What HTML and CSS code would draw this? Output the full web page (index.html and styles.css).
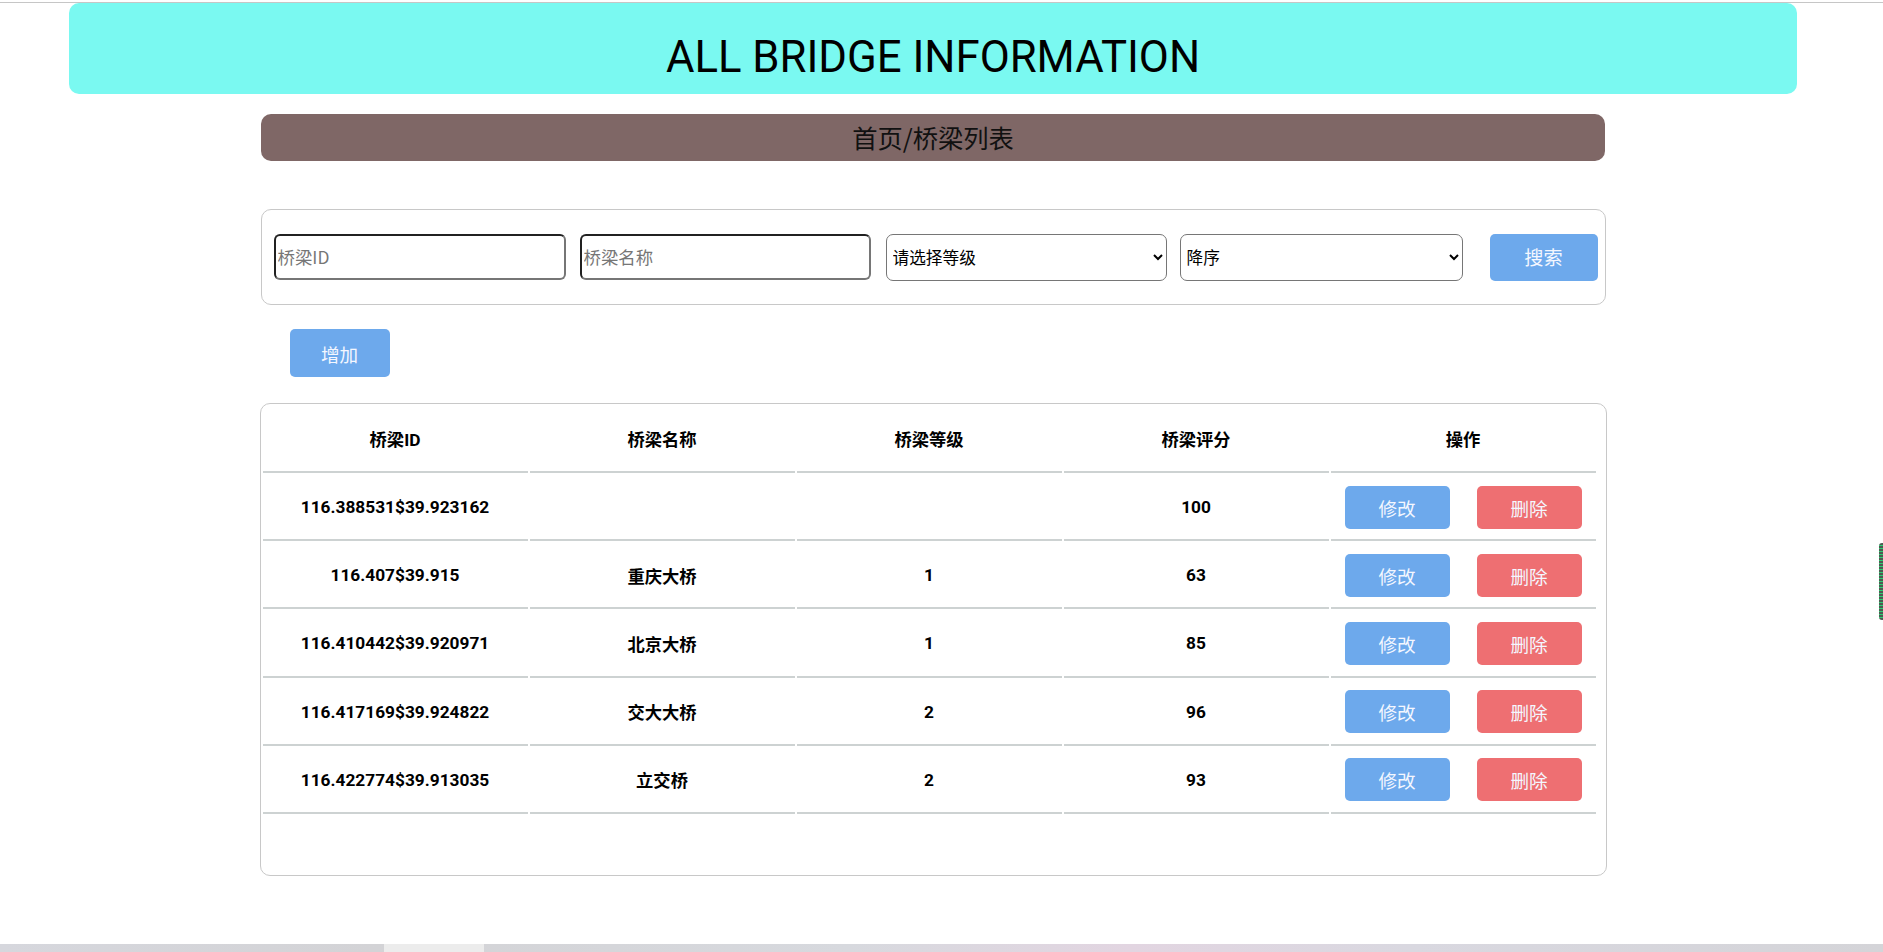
FILE: index.html
```html
<!DOCTYPE html>
<html lang="zh-CN">
<head>
<meta charset="utf-8">
<title>ALL BRIDGE INFORMATION</title>
<link rel="stylesheet" href="styles.css">
</head>
<body>
<div class="screen">
  <div class="topline"></div>
  <div class="page">
    <header class="banner"><h1>ALL BRIDGE INFORMATION</h1></header>
    <nav class="crumb">首页/桥梁列表</nav>
    <form class="search">
      <input class="field field-id" type="text" placeholder="桥梁ID">
      <input class="field field-name" type="text" placeholder="桥梁名称">
      <select class="sel sel-level"><option>请选择等级</option><option>1</option><option>2</option></select>
      <select class="sel sel-order"><option>降序</option><option>升序</option></select>
      <button type="button" class="btn btn-blue btn-search">搜索</button>
    </form>
    <div class="addrow"><button type="button" class="btn btn-blue btn-add">增加</button></div>
    <div class="tablebox">
      <table class="grid">
        <thead>
          <tr><th><div class="c ch">桥梁ID</div></th><th><div class="c ch">桥梁名称</div></th><th><div class="c ch">桥梁等级</div></th><th><div class="c ch">桥梁评分</div></th><th><div class="c ch">操作</div></th></tr>
        </thead>
        <tbody>
          <tr><td><div class="c">116.388531$39.923162</div></td><td><div class="c"></div></td><td><div class="c"></div></td><td><div class="c">100</div></td><td><div class="c ops"><button type="button" class="btn btn-blue btn-op">修改</button><button type="button" class="btn btn-red btn-op">删除</button></div></td></tr>
          <tr><td><div class="c">116.407$39.915</div></td><td><div class="c">重庆大桥</div></td><td><div class="c">1</div></td><td><div class="c">63</div></td><td><div class="c ops"><button type="button" class="btn btn-blue btn-op">修改</button><button type="button" class="btn btn-red btn-op">删除</button></div></td></tr>
          <tr><td><div class="c">116.410442$39.920971</div></td><td><div class="c">北京大桥</div></td><td><div class="c">1</div></td><td><div class="c">85</div></td><td><div class="c ops"><button type="button" class="btn btn-blue btn-op">修改</button><button type="button" class="btn btn-red btn-op">删除</button></div></td></tr>
          <tr><td><div class="c">116.417169$39.924822</div></td><td><div class="c">交大大桥</div></td><td><div class="c">2</div></td><td><div class="c">96</div></td><td><div class="c ops"><button type="button" class="btn btn-blue btn-op">修改</button><button type="button" class="btn btn-red btn-op">删除</button></div></td></tr>
          <tr><td><div class="c">116.422774$39.913035</div></td><td><div class="c">立交桥</div></td><td><div class="c">2</div></td><td><div class="c">93</div></td><td><div class="c ops"><button type="button" class="btn btn-blue btn-op">修改</button><button type="button" class="btn btn-red btn-op">删除</button></div></td></tr>
        </tbody>
      </table>
    </div>
  </div>
  <div class="taskbar"><span class="tb-seg"></span></div>
</div>
<div class="sidewidget"></div>
</body>
</html>
```

FILE: styles.css
```css
html, body {
  margin: 0;
  padding: 0;
  background: #ffffff;
}
body {
  font-family: Roboto, "Noto Sans CJK SC", sans-serif;
  color: #000;
  overflow: hidden;
}
.screen {
  min-height: 952px;
  display: flex;
  flex-direction: column;
}
.topline {
  height: 2px;
  border-bottom: 1px solid #c6c6c6;
}
.page {
  width: 1866px;
  display: flex;
  flex-direction: column;
  align-items: center;
}
.banner {
  width: 1728px;
  box-sizing: border-box;
  height: 91px;
  padding-top: 28px;
  background: #7af9f1;
  border-radius: 10px;
  text-align: center;
}
.banner h1 {
  margin: 0;
  font-family: Roboto, sans-serif;
  font-weight: 400;
  font-size: 43.7px;
  line-height: 52px;
  color: #000;
}
.crumb {
  margin-top: 20px;
  width: 1344px;
  height: 47px;
  background: #7f6766;
  border-radius: 10px;
  text-align: center;
  font-family: "Noto Sans CJK SC", sans-serif;
  font-size: 25.3px;
  line-height: 47px;
  color: #111;
}
.search {
  margin: 48px 0 0;
  width: 1345px;
  height: 96px;
  box-sizing: border-box;
  border: 1px solid #c8c8c8;
  border-radius: 10px;
  display: flex;
  align-items: center;
  padding: 0 7px 0 12px;
}
.field {
  box-sizing: border-box;
  height: 46px;
  border: 2px inset #767676;
  border-radius: 6px;
  padding: 0 2px;
  font-family: "Noto Sans CJK SC", sans-serif;
  font-size: 17.4px;
  background: #fff;
  margin-top: -1px;
}
.field::placeholder { color: #767676; }
.field-id { width: 292px; }
.field-name { width: 291px; margin-left: 14px; }
.sel {
  box-sizing: border-box;
  height: 47px;
  border: 1px solid #767676;
  border-radius: 7px;
  background-color: #fff;
  font-family: "Noto Sans CJK SC", sans-serif;
  font-size: 16.7px;
  color: #000;
  padding: 0 2px;
}
.sel-level { width: 281px; margin-left: 15px; }
.sel-order { width: 283px; margin-left: 13px; }
.btn {
  border: none;
  border-radius: 5px;
  color: #f4f7ff;
  font-family: "Noto Sans CJK SC", sans-serif;
  font-size: 18.6px;
  padding: 0;
  cursor: pointer;
}
.btn-blue { background: #6da9ec; }
.btn-red { background: #ee6f72; }
.btn-search { width: 108px; height: 47px; margin-left: 27px; font-size: 19.2px; }
.addrow {
  width: 1345px;
  margin-top: 24px;
  padding-left: 29px;
  box-sizing: border-box;
}
.btn-add { width: 100px; height: 48px; }
.tablebox {
  margin-top: 26px;
  width: 1347px;
  box-sizing: border-box;
  height: 473px;
  border: 1px solid #c8c8c8;
  border-radius: 10px;
}
.grid {
  width: 1337px;
  table-layout: fixed;
  border-collapse: separate;
  border-spacing: 2px;
}
.grid th, .grid td {
  padding: 0;
  border-bottom: 2px solid #cdd2d2;
  font-size: 17.3px;
  font-weight: 700;
}
.c {
  height: 64.2px;
  display: flex;
  align-items: center;
  justify-content: center;
  text-align: center;
}
.ch { height: 65px; }
.ops { gap: 27px; }
.btn-op { width: 105px; height: 43px; }
.taskbar {
  margin-top: auto;
  height: 8px;
  background: linear-gradient(90deg, #d6d7dd 0%, #d3d3d6 20%, #d7d9de 45%, #e2d5e1 60%, #d9d8e0 75%, #d4d4d8 100%);
}
.tb-seg {
  display: block;
  margin-left: 384px;
  width: 100px;
  height: 8px;
  background: #ececec;
}
.sidewidget {
  position: absolute;
  right: 0;
  top: 543px;
  width: 4px;
  height: 77px;
  border-radius: 3px 0 0 3px;
  background: repeating-linear-gradient(180deg, #4d5a52 0px, #4d5a52 2px, #2ecc71 2px, #2ecc71 3px);
}
```
